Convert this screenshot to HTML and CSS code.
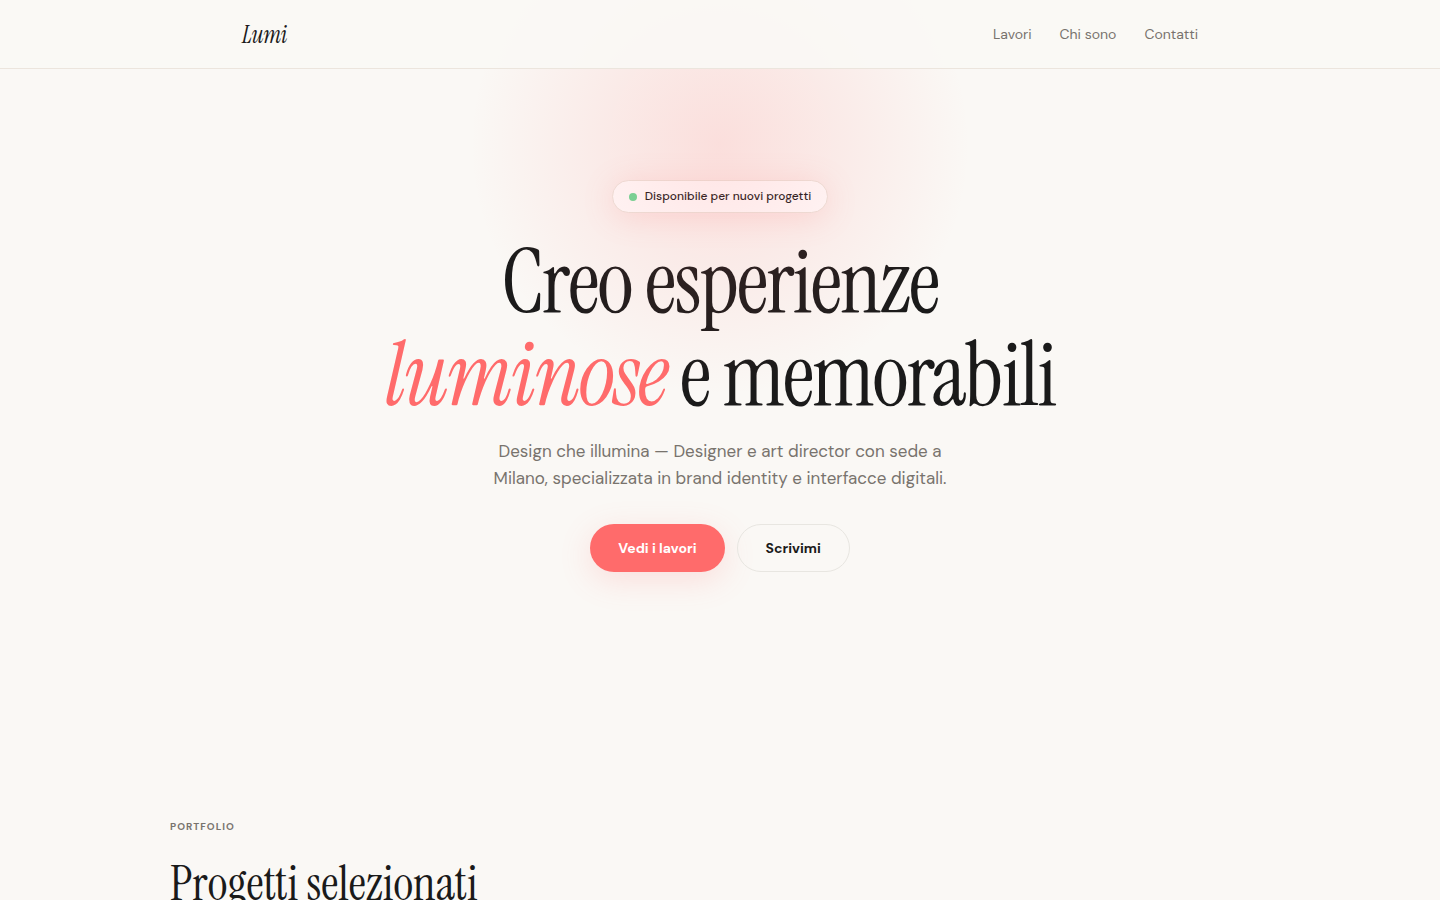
FILE: index.html
```html
<!DOCTYPE html>
<html lang="it">
<head>
    <meta charset="UTF-8">
    <meta name="viewport" content="width=device-width, initial-scale=1.0">
    <title>Lumi</title>
    <link rel="stylesheet" href="styles.css">
</head>
<body>
    <header class="site-header">
        <div class="header-inner">
            <a class="logo" href="#top">Lumi</a>
            <nav class="nav">
                <a href="#lavori">Lavori</a>
                <a href="#chi-sono">Chi sono</a>
                <a href="#contatti">Contatti</a>
            </nav>
        </div>
    </header>

    <main id="top">
        <section class="hero">
            <div class="badge"><span class="badge-dot"></span>Disponibile per nuovi progetti</div>
            <h1>Creo esperienze<br><em>luminose</em> e memorabili</h1>
            <p class="hero-text">Design che illumina — Designer e art director con sede a Milano, specializzata in brand identity e interfacce digitali.</p>
            <div class="hero-actions">
                <button type="button" class="btn btn-primary">Vedi i lavori</button>
                <button type="button" class="btn btn-ghost">Scrivimi</button>
            </div>
            <div class="glow"></div>
        </section>

        <section class="portfolio" id="lavori">
            <p class="label">Portfolio</p>
            <h2>Progetti selezionati</h2>
        </section>
    </main>
</body>
</html>
```

FILE: styles.css
```css
:root {
    --bg: #faf8f5;
    --ink: #1a1a1a;
    --muted: #78736d;
    --line: #ece5dd;
    --coral: #ff6b6b;
    --serif: "Instrument Serif", "Liberation Serif", serif;
    --sans: "DM Sans", Inter, sans-serif;
}

* {
    box-sizing: border-box;
}
body {
    margin: 0;
    background-color: var(--bg);
    color: var(--ink);
    font-family: var(--sans);
    font-size: 16px;
}
h1, h2, p {
    margin: 0;
}

/* Header */
.site-header {
    position: sticky;
    top: 0;
    z-index: 10;
    background-color: rgba(250, 248, 245, 0.9);
    border-bottom: 1px solid var(--line);
}
.header-inner {
    display: flex;
    align-items: center;
    justify-content: space-between;
    max-width: 956px;
    height: 68px;
    margin: 0 auto;
}
.logo {
    font-family: var(--serif);
    font-size: 24px;
    font-style: italic;
    letter-spacing: -0.02em;
    color: var(--ink);
    text-decoration: none;
}
.nav {
    display: flex;
    gap: 28px;
}
.nav a {
    font-size: 14px;
    color: var(--muted);
    text-decoration: none;
}

/* Hero */
.hero {
    position: relative;
    display: flex;
    flex-direction: column;
    align-items: center;
    padding: 111px 24px 120px;
    text-align: center;
}
.badge {
    display: flex;
    align-items: center;
    gap: 8px;
    padding: 6px 16px;
    border: 1px solid var(--line);
    border-radius: 999px;
    background-color: #fff;
    box-shadow: 0 4px 32px rgba(255, 107, 107, 0.18);
    font-size: 12px;
    font-weight: 500;
    line-height: 19px;
}
.badge-dot {
    width: 8px;
    height: 8px;
    border-radius: 50%;
    background-color: #6bdb98;
}
h1 {
    margin-top: 23px;
    font-family: var(--serif);
    font-size: 88px;
    font-weight: 400;
    line-height: 93px;
    letter-spacing: -0.02em;
}
h1 em {
    color: var(--coral);
}
.hero-text {
    max-width: 480px;
    margin-top: 16px;
    font-size: 17px;
    line-height: 27px;
    color: var(--muted);
}
.hero-actions {
    display: flex;
    gap: 12px;
    margin-top: 32px;
}
.btn {
    padding: 14px 28px;
    border: none;
    border-radius: 999px;
    font-family: inherit;
    font-size: 14px;
    font-weight: 700;
    line-height: 20px;
    cursor: pointer;
}
.btn-primary {
    background-color: var(--coral);
    color: #fff;
    box-shadow: 0 8px 32px rgba(255, 107, 107, 0.18);
}
.btn-ghost {
    padding: 13px 28px;
    border: 1px solid #e8e6e1;
    background-color: transparent;
    color: var(--ink);
}

/* Soft light that falls over the headline */
.glow {
    position: absolute;
    top: -174px;
    left: 50%;
    width: 500px;
    height: 500px;
    margin-left: -250px;
    border-radius: 50%;
    background: radial-gradient(circle closest-side, rgba(255, 107, 107, 0.18), transparent);
    pointer-events: none;
}

/* Portfolio */
.portfolio {
    max-width: 1100px;
    margin: 0 auto;
    padding: 127px 0 120px;
}
.label {
    font-size: 10px;
    font-weight: 700;
    line-height: 16px;
    letter-spacing: 1px;
    text-transform: uppercase;
    color: var(--muted);
}
h2 {
    margin-top: 23px;
    font-family: var(--serif);
    font-size: 48px;
    font-weight: 400;
    line-height: 52px;
}
```
